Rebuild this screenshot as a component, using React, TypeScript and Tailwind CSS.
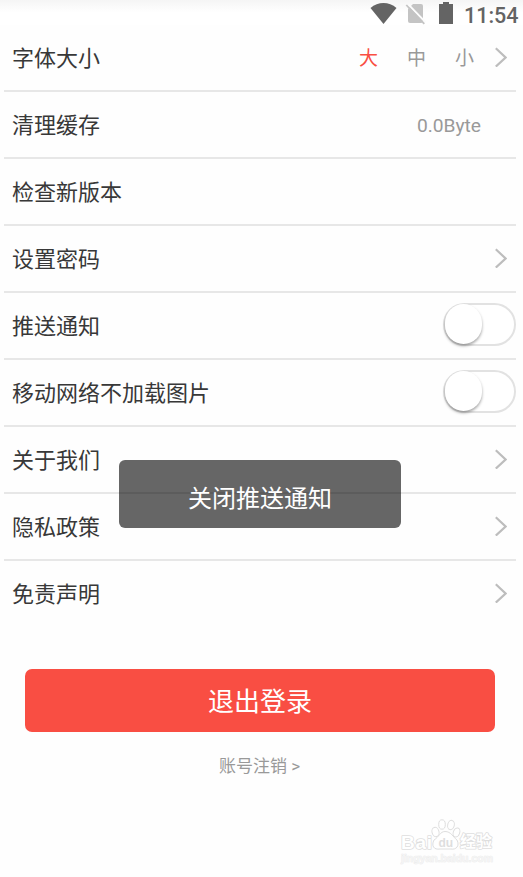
import type { ReactNode } from "react";

function Chevron() {
  return (
    <svg className="mr-[9px] mb-[1px] h-[20px] w-[12px]" viewBox="0 0 12 20" fill="none" stroke="#bdbdbd" strokeWidth="2.2">
      <path d="M0.8 1.2 L10.6 10.5 L0.8 19.6" />
    </svg>
  );
}

function Toggle() {
  return (
    <span className="mb-[3px] flex h-[43px] w-[73px] rounded-[22px] border-2 border-[#e2e2e2] bg-white">
      <span className="-mt-[1px] ml-0 h-[40px] w-[37px] rounded-[20px] bg-white shadow-[0_2px_3px_rgba(0,0,0,0.35)]" />
    </span>
  );
}

function Row({ label, last, children }: { label: string; last?: boolean; children?: ReactNode }) {
  return (
    <div className={`flex h-[67px] items-center justify-between border-b-2 pl-2 ${last ? "border-transparent" : "border-[#e7e7e7]"}`}>
      <span className="pt-[2px] text-[22px] leading-[32px] text-[#383838]">{label}</span>
      {children}
    </div>
  );
}

function StatusBar() {
  return (
    <header className="flex h-[25px] justify-end bg-linear-to-b from-[#f5f5f5] to-white to-50%">
      <svg className="h-[25px] w-[91px]" viewBox="370 0 91 25">
        <path d="M370.5 8 C378 1.3 389 1.3 396.5 8 L383.5 24 Z" fill="#646464" />
        <path d="M413 4 H421 Q423 4 423 6 V21 Q423 23 421 23 H410 Q408 23 408 21 V9 Z" fill="#c4c4c4" />
        <path d="M408.5 4.6 L425.5 22.2" stroke="#fcfcfc" strokeWidth="2" />
        <path d="M406.3 5 L424.3 23.8" stroke="#c4c4c4" strokeWidth="1.8" />
        <path d="M443 2 H449 V4 H453 V24 H439 V4 H443 Z" fill="#646464" />
      </svg>
      <span className="mr-[5px] ml-[3px] w-[54px] pt-[3px] font-['Roboto',sans-serif] text-[21.5px] leading-[25px] font-medium text-[#646464]">11:54</span>
    </header>
  );
}

function Watermark() {
  return (
    <svg className="absolute top-[815px] left-[396px] h-[56px] w-[108px] overflow-visible" viewBox="396 816 108 56" fill="#ffffff" stroke="#dedede" strokeWidth="1">
      <g strokeLinejoin="round" paintOrder="stroke" strokeWidth="1.6">
        <text x="401" y="849.5" fontFamily="Liberation Sans, sans-serif" fontWeight="700" fontSize="19" textLength="31">Bai</text>
        <text x="460" y="848" fontFamily="Noto Sans CJK SC, sans-serif" fontWeight="700" fontSize="16" textLength="32">经验</text>
        <text x="401" y="862.5" fontFamily="Liberation Sans, sans-serif" fontWeight="700" fontSize="10.5" strokeWidth="0.6" stroke="#e9e9e9" fill="#f4f4f4" textLength="92">jingyan.baidu.com</text>
      </g>
      <ellipse cx="435.5" cy="833" rx="3.5" ry="4.7" transform="rotate(-15 435.5 833)" />
      <ellipse cx="442" cy="825.5" rx="3.3" ry="4.7" />
      <ellipse cx="451" cy="826" rx="3.3" ry="4.7" transform="rotate(12 451 826)" />
      <ellipse cx="456.5" cy="833.5" rx="3.2" ry="4.7" transform="rotate(20 456.5 833.5)" />
      <path d="M445 832.5 C451 832.5 453 838 457 841 C460 847 456 851 451 850 H440 C434 851 431 847 434 841 C439 838 440 832.5 445 832.5 Z" />
      <text x="438.5" y="847.5" fontFamily="Liberation Sans, sans-serif" fontWeight="700" fontSize="12" fill="#dedede" stroke="none">du</text>
    </svg>
  );
}

export default function App() {
  return (
    <main className="relative h-[877px] w-[523px] overflow-hidden bg-[#fefefe] font-['Roboto','Noto_Sans_CJK_SC',sans-serif]">
      <StatusBar />
      <section className="mr-[7px] ml-1">
        <Row label="字体大小">
          <div className="flex items-center text-[19px] leading-[28px] text-[#999999]">
            <span className="mr-[29px] pt-[2px] text-[#f94e43]">大</span>
            <span className="mr-[29px] pt-[2px]">中</span>
            <span className="mr-[21px] pt-[2px]">小</span>
            <Chevron />
          </div>
        </Row>
        <Row label="清理缓存">
          <span className="mr-[35px] pt-[4px] text-[19.2px] text-[#999999]">0.0Byte</span>
        </Row>
        <Row label="检查新版本" />
        <Row label="设置密码"><Chevron /></Row>
        <Row label="推送通知"><Toggle /></Row>
        <Row label="移动网络不加载图片"><Toggle /></Row>
        <Row label="关于我们"><Chevron /></Row>
        <Row label="隐私政策"><Chevron /></Row>
        <Row label="免责声明" last><Chevron /></Row>
      </section>
      <div className="mt-[41px] mr-[28px] ml-[25px] flex flex-col items-center">
        <button className="h-[63px] w-full rounded-[7px] bg-[#f94e43] pt-[3px] text-[26px] leading-[60px] text-white">退出登录</button>
        <a className="mt-[21px] mr-[1px] text-[17px] leading-[26px] text-[#999999]">账号注销 &gt;</a>
      </div>
      <div className="absolute top-[460px] left-[119px] flex h-[68px] w-[282px] items-center justify-center rounded-[6px] bg-black/60 pt-[10px] text-[24px] text-white">关闭推送通知</div>
      <Watermark />
    </main>
  );
}
